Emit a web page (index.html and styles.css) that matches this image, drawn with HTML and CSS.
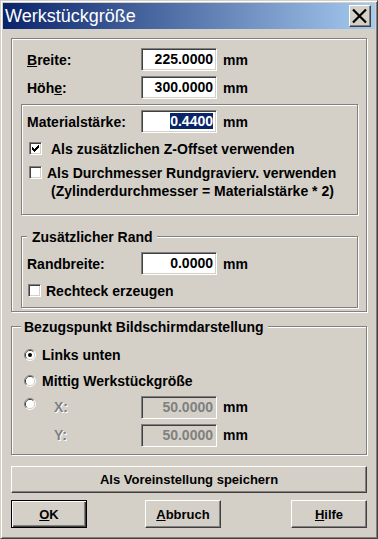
FILE: index.html
```html
<!DOCTYPE html>
<html lang="de">
<head>
<meta charset="utf-8">
<title>Werkstückgröße</title>
<link rel="stylesheet" href="styles.css">
</head>
<body>
<div class="window">
  <div class="titlebar">
    <span class="title">Werkstückgröße</span>
    <button class="close" aria-label="Schließen">
      <svg width="20" height="20" viewBox="0 0 20 20"><path d="M3 3.5L16 16.5M16 3.5L3 16.5" stroke="#000" stroke-width="2.2" fill="none"/></svg>
    </button>
  </div>
  <div class="content">
    <div class="group g-main">
      <div class="row r-first"><span class="lbl"><u>B</u>reite:</span><span class="field">225.0000</span><span class="unit">mm</span></div>
      <div class="row r-second"><span class="lbl">Höh<u>e</u>:</span><span class="field">300.0000</span><span class="unit">mm</span></div>
      <div class="group g-mat">
        <div class="row"><span class="lbl">Materialstärke:</span><span class="field"><span class="sel">0.4400</span></span><span class="unit">mm</span></div>
        <div class="check c1">
          <span class="box"><svg width="11" height="11" viewBox="0 0 11 11" shape-rendering="crispEdges"><path d="M8 2h1v1h-1zM7 3h2v1h-2zM2 4h1v1h-1zM6 4h3v1h-3zM2 5h2v1h-2zM5 5h3v1h-3zM2 6h5v1h-5zM3 7h3v1h-3zM4 8h1v1h-1z" fill="#000"/></svg></span>
          <span class="ctext t1">Als zusätzlichen Z-Offset verwenden</span>
        </div>
        <div class="check c2"><span class="box"></span><span class="ctext t2">Als Durchmesser Rundgravierv. verwenden</span></div>
        <div class="note">(Zylinderdurchmesser = Materialstärke * 2)</div>
      </div>
      <div class="group g-rand">
        <div class="legend">Zusätzlicher Rand</div>
        <div class="row"><span class="lbl">Randbreite:</span><span class="field">0.0000</span><span class="unit">mm</span></div>
        <div class="check c3"><span class="box"></span><span class="ctext t3">Rechteck erzeugen</span></div>
      </div>
    </div>

    <div class="group g-bezug">
      <div class="legend">Bezugspunkt Bildschirmdarstellung</div>
      <div class="radio-row rr1">
        <svg class="radio" width="12" height="12" viewBox="0 0 12 12"><path d="M2.11 9.89A5.5 5.5 0 0 1 9.89 2.11" stroke="#808080" fill="none"/><path d="M9.89 2.11A5.5 5.5 0 0 1 2.11 9.89" stroke="#fff" fill="none"/><path d="M2.82 9.18A4.5 4.5 0 0 1 9.18 2.82" stroke="#404040" fill="none"/><path d="M9.18 2.82A4.5 4.5 0 0 1 2.82 9.18" stroke="#d4d0c8" fill="none"/><circle cx="6" cy="6" r="4" fill="#fff"/><circle cx="6" cy="6" r="2" fill="#000"/></svg>
        <span class="rtext">Links unten</span>
      </div>
      <div class="radio-row rr2">
        <svg class="radio" width="12" height="12" viewBox="0 0 12 12"><path d="M2.11 9.89A5.5 5.5 0 0 1 9.89 2.11" stroke="#808080" fill="none"/><path d="M9.89 2.11A5.5 5.5 0 0 1 2.11 9.89" stroke="#fff" fill="none"/><path d="M2.82 9.18A4.5 4.5 0 0 1 9.18 2.82" stroke="#404040" fill="none"/><path d="M9.18 2.82A4.5 4.5 0 0 1 2.82 9.18" stroke="#d4d0c8" fill="none"/><circle cx="6" cy="6" r="4" fill="#fff"/></svg>
        <span class="rtext">Mittig Werkstückgröße</span>
      </div>
      <div class="coord-row cx">
        <svg class="radio" width="12" height="12" viewBox="0 0 12 12"><path d="M2.11 9.89A5.5 5.5 0 0 1 9.89 2.11" stroke="#808080" fill="none"/><path d="M9.89 2.11A5.5 5.5 0 0 1 2.11 9.89" stroke="#fff" fill="none"/><path d="M2.82 9.18A4.5 4.5 0 0 1 9.18 2.82" stroke="#404040" fill="none"/><path d="M9.18 2.82A4.5 4.5 0 0 1 2.82 9.18" stroke="#d4d0c8" fill="none"/><circle cx="6" cy="6" r="4" fill="#fff"/></svg>
        <span class="dlbl">X:</span><span class="field disabled">50.0000</span><span class="unit">mm</span>
      </div>
      <div class="coord-row cy">
        <span class="dlbl">Y:</span><span class="field disabled">50.0000</span><span class="unit">mm</span>
      </div>
    </div>

    <button class="btn save">Als Voreinstellung speichern</button>
    <div class="btn-row">
      <button class="btn default"><u>O</u>K</button>
      <button class="btn abbruch"><u>A</u>bbruch</button>
      <button class="btn hilfe"><u>H</u>ilfe</button>
    </div>
  </div>
</div>
</body>
</html>
```

FILE: styles.css
```css
* { box-sizing: border-box; }
html, body { margin: 0; padding: 0; }
body {
  background: #d4d0c8;
  font-family: "Liberation Sans", Arial, sans-serif;
  font-size: 14px;
  font-weight: bold;
  color: #000;
}
svg { display: block; }

.window {
  width: 378px;
  height: 539px;
  border: 1px solid;
  border-color: #d4d0c8 #404040 #404040 #d4d0c8;
  box-shadow: inset 1px 1px 0 #fff, inset -1px -1px 0 #808080;
  padding: 2px;
  background: #d4d0c8;
  display: flex;
  flex-direction: column;
}

.titlebar {
  height: 26px;
  flex: none;
  background: linear-gradient(to right, #0a246a, #a6caf0);
  display: flex;
  align-items: center;
  justify-content: space-between;
}
.title {
  color: #fff;
  font-weight: normal;
  font-size: 18px;
  padding-left: 2px;
}
.close {
  width: 22px;
  height: 22px;
  margin-right: 4px;
  padding: 0;
  background: #d4d0c8;
  border: 1px solid;
  border-color: #fff #404040 #404040 #fff;
  box-shadow: inset -1px -1px 0 #808080;
  display: flex;
  align-items: center;
  justify-content: center;
}

.content {
  padding: 0 8px;
  display: flex;
  flex-direction: column;
}

.group {
  border: 1px solid #808080;
  box-shadow: 1px 1px 0 #fff, inset 1px 1px 0 #fff;
  display: flex;
  flex-direction: column;
}

.g-main {
  margin-top: 9px;
  padding: 9px 8px 3px 9px;
}
.g-main > .row { padding-left: 6px; }
.r-second { margin-top: 5px; }

.row {
  display: flex;
  align-items: center;
  height: 23px;
}
.lbl { width: 114px; flex: none; }
.field {
  width: 76px;
  height: 23px;
  flex: none;
  border: 1px solid;
  border-color: #808080 #fff #fff #808080;
  box-shadow: inset 1px 1px 0 #404040, inset -1px -1px 0 #d4d0c8;
  background: #fff;
  text-align: right;
  padding-right: 3px;
  line-height: 21px;
}
.field.disabled { background: #d4d0c8; color: #808080; }
.sel { background: #0a246a; color: #fff; }
.unit { margin-left: 6px; }

.g-mat {
  margin-top: 5px;
  padding: 5px 0 15px 0;
}
.g-mat > .row, .g-rand > .row { padding-left: 5px; }

.check {
  display: flex;
  align-items: center;
  height: 13px;
  padding-left: 7px;
}
.c1 { margin-top: 9px; }
.c2 { margin-top: 11px; }
.box {
  width: 13px;
  height: 13px;
  flex: none;
  border: 1px solid;
  border-color: #808080 #fff #fff #808080;
  box-shadow: inset 1px 1px 0 #404040, inset -1px -1px 0 #d4d0c8;
  background: #fff;
}
.t1 { margin-left: 9px; }
.t2 { margin-left: 5px; }
.note {
  margin-top: 5px;
  line-height: 15px;
  padding-left: 29px;
}

.legend {
  align-self: flex-start;
  margin-top: -8px;
  height: 16px;
  line-height: 16px;
  background: #d4d0c8;
}
.g-rand {
  margin-top: 21px;
  padding-bottom: 10px;
}
.g-rand .legend { margin-left: 5px; padding: 0 4px 0 5px; }
.g-rand > .row { margin-top: 7px; }
.c3 { margin-top: 9px; padding-left: 6px; }
.t3 { margin-left: 5px; }

.g-bezug {
  margin-top: 14px;
  padding-bottom: 7px;
}
.g-bezug .legend { margin-left: 9px; padding: 0 4px 0 3px; }
.radio { flex: none; }
.radio-row {
  display: flex;
  align-items: center;
  height: 12px;
  padding-left: 12px;
}
.rr1 { margin-top: 14px; }
.rr2 { margin-top: 14px; }
.rtext { margin-left: 6px; }
.coord-row {
  display: flex;
  align-items: flex-start;
  height: 23px;
  padding-left: 12px;
  line-height: 23px;
}
.cx { margin-top: 9px; }
.cx .radio { margin-top: 2px; }
.cy { margin-top: 5px; padding-left: 42px; }
.dlbl {
  width: 87px;
  flex: none;
  color: #808080;
  text-shadow: 1px 1px 0 #fff;
}
.cx .dlbl { margin-left: 18px; }

.btn {
  font: inherit;
  font-size: 13px;
  font-weight: bold;
  color: #000;
  background: #d4d0c8;
  border: 1px solid;
  border-color: #fff #404040 #404040 #fff;
  box-shadow: inset -1px -1px 0 #808080;
  padding: 0;
}
.save {
  margin-top: 11px;
  height: 27px;
  width: 100%;
}
.btn-row {
  display: flex;
  margin-top: 7px;
}
.btn-row .btn { width: 76px; height: 28px; }
.btn.default {
  border-color: #000;
  box-shadow: inset 1px 1px 0 #fff, inset -1px -1px 0 #404040, inset -2px -2px 0 #808080;
}
.abbruch { margin-left: 58px; }
.hilfe { margin-left: auto; }
```
